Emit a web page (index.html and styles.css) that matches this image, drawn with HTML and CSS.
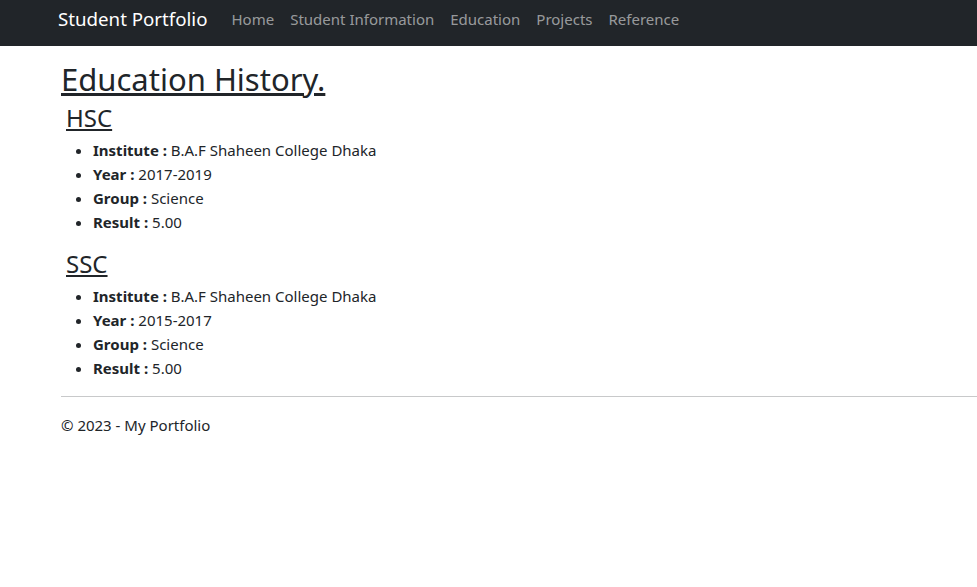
FILE: index.html
```html
<!DOCTYPE html>
<html lang="en">
<head>
<meta charset="utf-8">
<title>Student Portfolio</title>
<link rel="stylesheet" href="styles.css">
</head>
<body>
<nav class="navbar">
  <a class="brand" href="#">Student Portfolio</a>
  <ul class="nav">
    <li><a href="#">Home</a></li>
    <li><a href="#">Student Information</a></li>
    <li><a href="#">Education</a></li>
    <li><a href="#">Projects</a></li>
    <li><a href="#">Reference</a></li>
  </ul>
</nav>
<main class="main">
  <h1 class="title"><u>Education History.</u></h1>
  <h2 class="level"><u>HSC</u></h2>
  <ul class="details">
    <li><b>Institute :</b> B.A.F Shaheen College Dhaka</li>
    <li><b>Year :</b> 2017-2019</li>
    <li><b>Group :</b> Science</li>
    <li><b>Result :</b> 5.00</li>
  </ul>
  <h2 class="level"><u>SSC</u></h2>
  <ul class="details">
    <li><b>Institute :</b> B.A.F Shaheen College Dhaka</li>
    <li><b>Year :</b> 2015-2017</li>
    <li><b>Group :</b> Science</li>
    <li><b>Result :</b> 5.00</li>
  </ul>
  <hr class="rule">
  <footer class="footer">© 2023 - My Portfolio</footer>
</main>
</body>
</html>
```
FILE: styles.css
```css
* { box-sizing: border-box; }
html, body {
  margin: 0;
  padding: 0;
  background: #fff;
  color: #212529;
  font-family: "Noto Sans", "Open Sans", sans-serif;
  font-size: 15px;
  line-height: 24px;
}
.navbar {
  display: flex;
  align-items: center;
  height: 46px;
  background: #212529;
  padding: 0 0 9px 58px;
}
.brand {
  color: #fff;
  font-size: 18.7px;
  text-decoration: none;
  margin-right: 16px;
  line-height: 30px;
}
.nav {
  display: flex;
  list-style: none;
  margin: 0;
  padding: 0;
}
.nav a {
  display: block;
  padding: 0 8px;
  color: rgba(255, 255, 255, 0.55);
  text-decoration: none;
  font-size: 15px;
}
.main {
  padding: 15px 0 0 61px;
}
.title {
  margin: 0 0 6px;
  font-size: 31px;
  font-weight: 400;
  line-height: 1.2;
}
.level {
  margin: 0 0 5px;
  padding-left: 5px;
  font-size: 24px;
  font-weight: 400;
  line-height: 1.2;
}
.details {
  margin: 0 0 16px;
  padding-left: 32px;
}
.details b { font-weight: 700; }
.rule {
  margin: 16px 0;
  border: 0;
  border-top: 1px solid #c8c9ca;
}
.footer {
  font-size: 15px;
}
```
